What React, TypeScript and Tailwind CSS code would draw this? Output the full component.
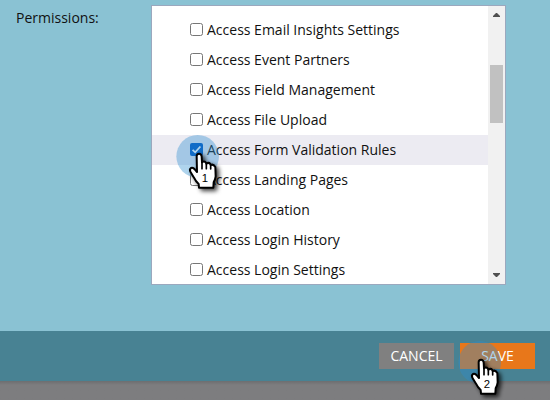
const permissions = [
  { label: 'Access Email Insights Settings', checked: false },
  { label: 'Access Event Partners', checked: false },
  { label: 'Access Field Management', checked: false },
  { label: 'Access File Upload', checked: false },
  { label: 'Access Form Validation Rules', checked: true },
  { label: 'Access Landing Pages', checked: false },
  { label: 'Access Location', checked: false },
  { label: 'Access Login History', checked: false },
  { label: 'Access Login Settings', checked: false },
];

function Checkbox({ checked }: { checked: boolean }) {
  return checked ? (
    <span className="flex size-[13px] shrink-0 items-center justify-center rounded-[2px] bg-[#0057c2]">
      <svg viewBox="0 0 13 13" className="size-[13px]" fill="none" stroke="white" strokeWidth="1.8">
        <path d="M2.6 6.8 5.2 9.3 10.4 3.5" />
      </svg>
    </span>
  ) : (
    <span className="size-[13px] shrink-0 rounded-[2.5px] border border-[#767676] bg-white" />
  );
}

// Pointing hand with a step number, centred on a translucent click halo.
function ClickMarker({ step }: { step: number }) {
  return (
    <svg viewBox="0 0 192 210" className="h-[70px] w-[64px]">
      <defs>
        <filter id={`shadow-${step}`} x="-40%" y="-40%" width="200%" height="200%">
          <feDropShadow dx="8" dy="7" stdDeviation="6" floodColor="#000" floodOpacity="0.75" />
        </filter>
      </defs>
      <circle cx="74" cy="82" r="64" fill="#2c8fd0" fillOpacity="0.38" />
      <g filter={`url(#shadow-${step})`}>
        <path
          d="M71 82 Q71 74 78 74 Q85 74 86 82 L87 100 Q93 95 99 101 L100 104 Q107 99 112 105 L113 108 Q121 104 127 114 L128 142 Q127 151 122 160 L121 176 L78 176 L77 165 Q68 157 63 146 L53 130 Q48 121 54 117 Q60 114 66 122 L72 129 Z"
          fill="white"
          stroke="black"
          strokeWidth="6"
          strokeLinejoin="round"
        />
        <path d="M87 98V119M100 103V119M113 108V120" stroke="black" strokeWidth="5" strokeLinecap="round" />
      </g>
      <text x="96" y="158" textAnchor="middle" fontSize="34" fill="black" className="font-['Liberation_Sans',sans-serif]">
        {step}
      </text>
    </svg>
  );
}

export default function App() {
  return (
    <div className="relative flex h-[400px] w-[550px] flex-col overflow-hidden bg-[#8ac2d3] font-['Open_Sans','Noto_Sans',sans-serif] text-[14px] text-[#111]">
      <main className="flex h-[331px] shrink-0 pt-[5px] pl-4">
        <div className="w-[135px] pt-[3px] leading-5">Permissions:</div>
        <div className="flex h-[280px] w-[355px] border border-[#9ba8be] bg-white">
          <ul className="flex-1 overflow-hidden pt-[9px]">
            {permissions.map(({ label, checked }) => (
              <li key={label} className={`flex h-[30px] items-center gap-1 pb-0.5 pl-[38px] whitespace-nowrap ${checked ? 'bg-[#ecebf2]' : ''}`}>
                <Checkbox checked={checked} />
                <span>{label}</span>
              </li>
            ))}
          </ul>
          <div className="flex w-[17px] flex-col items-center bg-[#f1f1f1] pt-[7px] pb-[7px]">
            <svg viewBox="0 0 7 4" className="h-1 w-[7px]" fill="#505050"><path d="M0 4V3L3 0H4L7 3V4Z" /></svg>
            <div className="mt-[48px] h-[58px] w-[13px] bg-[#c1c1c1]" />
            <svg viewBox="0 0 7 4" className="mt-auto h-1 w-[7px]" fill="#505050"><path d="M0 0V1L3 4H4L7 1V0Z" /></svg>
          </div>
        </div>
      </main>
      <footer className="flex h-[50px] shrink-0 justify-end gap-1.5 bg-[#488293] pt-3 pr-[15px] text-white">
        <button className="h-[26px] w-[75px] bg-[#808080] pb-0.5">CANCEL</button>
        <button className="h-[26px] w-[75px] bg-[#e8771a] pb-0.5">SAVE</button>
      </footer>
      <div className="flex-1 bg-[#7d7d7f] bg-linear-to-b from-[#6d6e70] to-[#7d7d7f] to-[4px]" />
      <div className="absolute top-[129px] left-[173px]"><ClickMarker step={1} /></div>
      <div className="absolute top-[335px] left-[455px]"><ClickMarker step={2} /></div>
    </div>
  );
}
